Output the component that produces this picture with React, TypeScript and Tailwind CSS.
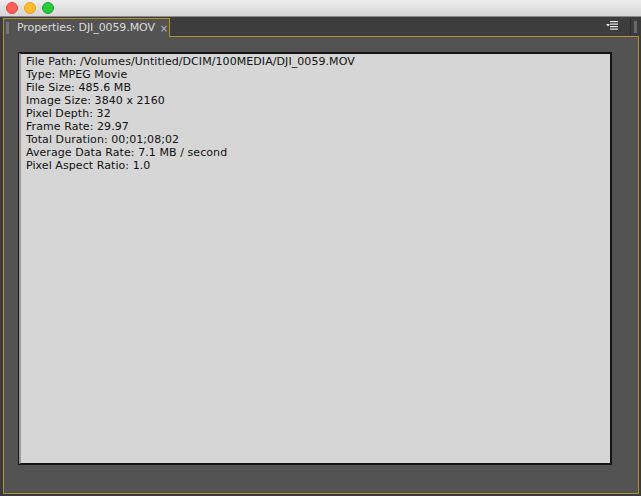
export default function App() {
  const lines = [
    "File Path: /Volumes/Untitled/DCIM/100MEDIA/DJI_0059.MOV",
    "Type: MPEG Movie",
    "File Size: 485.6 MB",
    "Image Size: 3840 x 2160",
    "Pixel Depth: 32",
    "Frame Rate: 29.97",
    "Total Duration: 00;01;08;02",
    "Average Data Rate: 7.1 MB / second",
    "Pixel Aspect Ratio: 1.0",
  ];
  const dots = { backgroundImage: "radial-gradient(#9a9a9a 0.6px, transparent 0.8px)", backgroundSize: "2px 2px" };
  return (
    <div className="w-[641px] h-[496px] bg-[#3a3a3a] flex flex-col overflow-hidden" style={{ fontFamily: '"DejaVu Sans", sans-serif' }}>
      {/* title bar */}
      <div className="h-[17px] shrink-0 bg-gradient-to-b from-[#ededed] to-[#d6d6d6] border-b border-[#8a8a8a] flex items-center gap-[6px] pl-[6px]">
        <div className="w-[12px] h-[12px] rounded-full bg-[#fc5f57] border border-[#e0443e]" />
        <div className="w-[12px] h-[12px] rounded-full bg-[#fdbc2e] border border-[#dea123]" />
        <div className="w-[12px] h-[12px] rounded-full bg-[#28c840] border border-[#1aab29]" />
      </div>
      {/* tab row */}
      <div className="h-[19px] shrink-0 flex items-end pl-[3px] pr-[2px] bg-[#3d3d3d]">
        <div className="h-[19px] w-[167px] shrink-0 overflow-hidden bg-[#535353] border-t border-l border-r border-[#b48f2f] flex items-center relative top-[1px] whitespace-nowrap">
          <div className="w-[3px] h-[12px] ml-[2px] mr-[8px] shrink-0" style={dots} />
          <span className="text-[11px] text-[#dcdcdc] tracking-[-0.1px]">Properties: DJI_0059.MOV</span>
          <span className="text-[10px] text-[#bdbdbd] ml-[5px]">×</span>
        </div>
        <div className="flex-1 h-full flex items-center justify-end">
          <svg width="12" height="9" viewBox="0 0 12 9" className="mr-[12px] mb-[2px]">
            <path d="M0 3 L4 3 L2 5.5 Z" fill="#e8e8e8" />
            <rect x="4" y="0" width="8" height="1.2" fill="#e8e8e8" />
            <rect x="4" y="2.5" width="8" height="1.2" fill="#e8e8e8" />
            <rect x="4" y="5" width="8" height="1.2" fill="#e8e8e8" />
            <rect x="4" y="7.5" width="8" height="1.2" fill="#e8e8e8" />
          </svg>
          <div className="w-px h-[16px] bg-[#2a2a2a] mr-[3px]" />
          <div className="w-[3px] h-[12px] mr-[2px]" style={dots} />
        </div>
      </div>
      {/* panel */}
      <div className="flex-1 ml-[3px] mr-[2px] mb-[2px] bg-[#535353] border border-[#b48f2f] pt-[16px] pl-[15px] pr-[27px] pb-[29px] flex">
        <div className="flex-1 bg-[#d6d6d6] border border-[#151515] border-l-[2px] border-l-[#9c9c9c] pl-[5px] pt-[1px] flex flex-col outline outline-1 outline-[#151515]">
          {lines.map((l) => (
            <div key={l} className="text-[11px] leading-[13px] text-[#111] tracking-[0.07px] whitespace-nowrap">{l}</div>
          ))}
        </div>
      </div>
    </div>
  );
}
